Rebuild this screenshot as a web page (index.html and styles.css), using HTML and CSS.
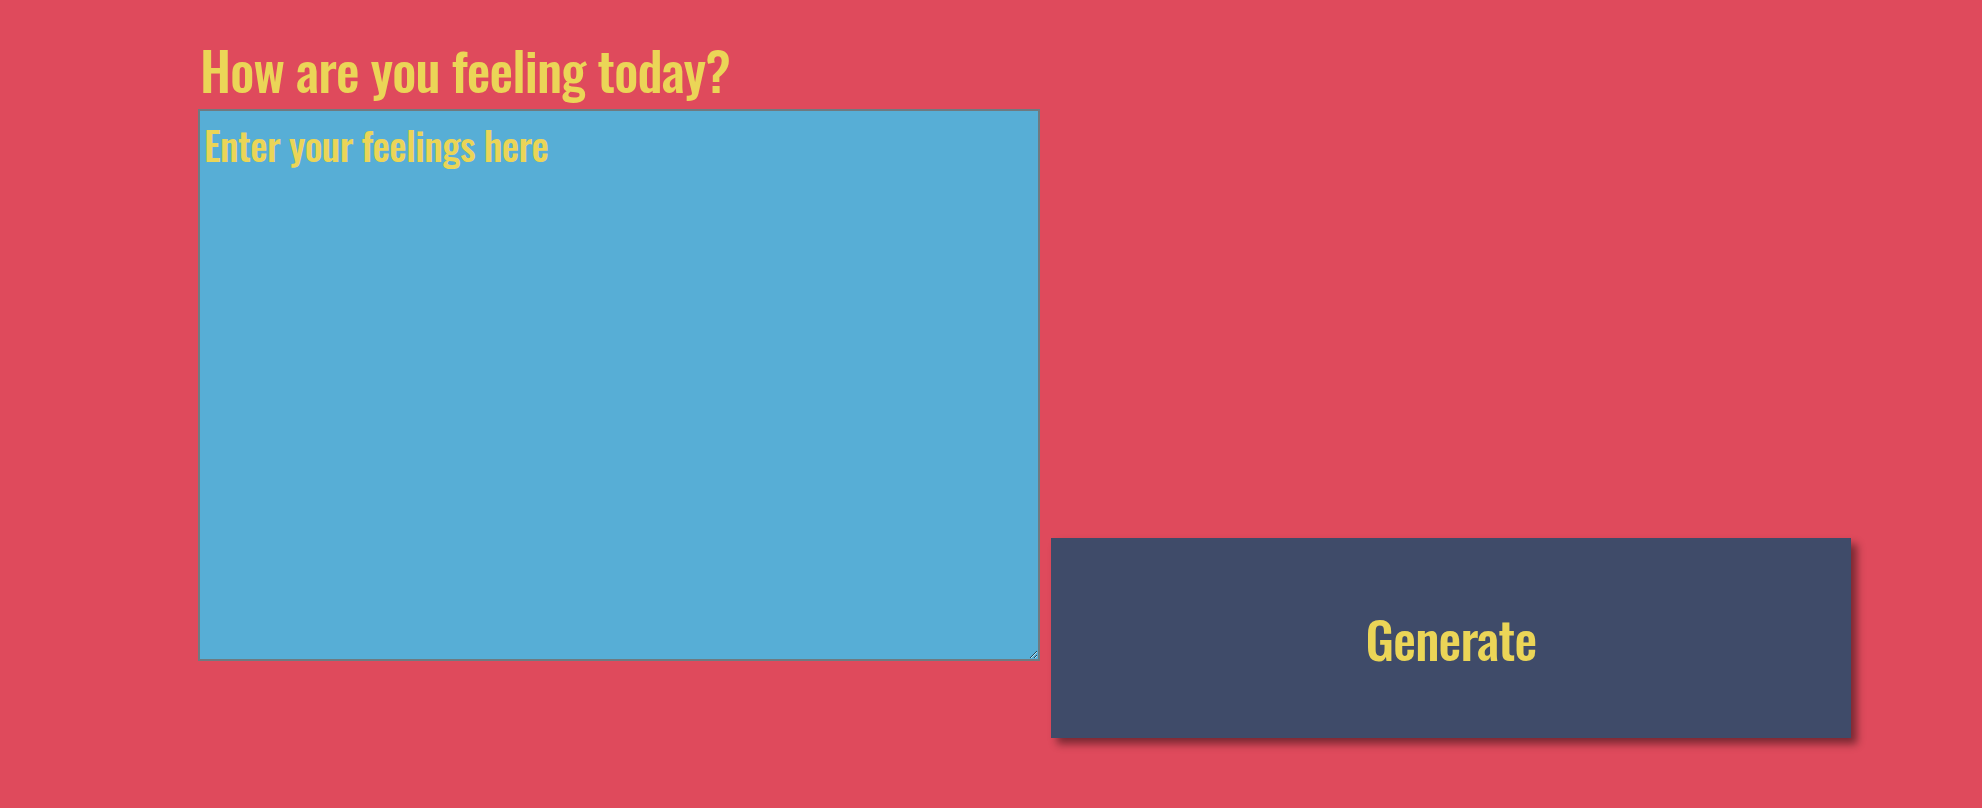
FILE: index.html
```html
<!DOCTYPE html>
<html lang="en">
<head>
<meta charset="utf-8">
<title>Feelings</title>
<link rel="stylesheet" href="styles.css">
</head>
<body>
<main class="page">
  <h1 class="title">How are you feeling today?</h1>
  <div class="row">
    <textarea class="feelings" placeholder="Enter your feelings here"></textarea>
    <button class="generate" type="button">Generate</button>
  </div>
</main>
</body>
</html>
```

FILE: styles.css
```css
html, body {
  margin: 0;
  padding: 0;
  background: #df4a5c;
  height: 100%;
}
.page {
  padding: 0 0 0 198px;
  font-family: "Oswald", "Liberation Sans Narrow", "DejaVu Sans Condensed", "Liberation Sans", sans-serif;
  color: #ebd557;
}
.title {
  margin: 0 0 4px;
  padding-top: 34px;
  padding-left: 2px;
  font-size: 53px;
  line-height: 71px;
  font-weight: 500;
  letter-spacing: -0.85px;
  height: 71px;
}
.row {
  display: flex;
  align-items: flex-start;
  gap: 11px;
}
.feelings {
  box-sizing: border-box;
  width: 842px;
  height: 552px;
  margin: 0;
  border: 2px solid #6f7a80;
  background: #57aed6;
  padding: 4px;
  font-family: inherit;
  font-size: 39px;
  font-weight: 500;
  letter-spacing: -0.63px;
  color: #ebd557;
  outline: none;
}
.feelings::placeholder {
  color: #ebd557;
  opacity: 1;
}
.generate {
  margin-top: 429px;
  width: 800px;
  height: 200px;
  border: none;
  background: #3f4b69;
  color: #ebd557;
  font-family: inherit;
  font-size: 51px;
  font-weight: 500;
  letter-spacing: -0.8px;
  box-shadow: 6px 6px 8px rgba(0, 0, 0, 0.45);
  padding: 0;
}
```
